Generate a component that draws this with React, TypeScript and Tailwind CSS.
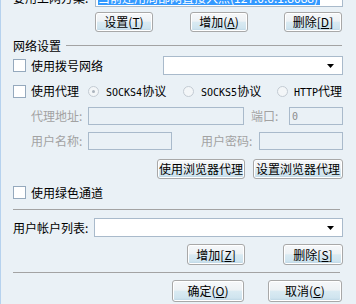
const font = "font-['Noto_Sans_CJK_SC','Noto_Sans',sans-serif]";
const mono = "font-['DejaVu_Sans_Mono','Liberation_Mono',monospace] text-[10px]";

const Btn = ({ children, className = "" }: { children: React.ReactNode; className?: string }) => (
  <div
    className={`flex items-center justify-center rounded-[3px] border border-[#a8a8a8] shadow-[inset_0_0_0_1px_#ffffff] bg-[linear-gradient(to_bottom,#f6f8fa_0%,#eef2f5_45%,#d9eaf2_52%,#cfe4ef_85%,#b8d2e1_100%)] text-[12px] leading-none text-black ${className}`}
  >
    {children}
  </div>
);

const Check = () => <div className="h-[13px] w-[13px] shrink-0 border border-[#95a9bd] bg-white" />;

const Radio = ({ on = false }: { on?: boolean }) => (
  <div className="flex h-[11px] w-[11px] shrink-0 items-center justify-center rounded-full border border-[#c3cbd3] bg-[#f3f6f8]">
    {on && <div className="h-[3px] w-[3px] rounded-full bg-[#aab3bc]" />}
  </div>
);

const Field = ({ className = "", children }: { className?: string; children?: React.ReactNode }) => (
  <div className={`flex items-center border border-[#a9bacb] px-[2px] text-[12px] ${className}`}>{children}</div>
);

const Arrow = () => (
  <svg width="7" height="4" viewBox="0 0 7 4" className="ml-auto mr-[6px]">
    <path d="M0 0h7L3.5 4z" fill="#000" />
  </svg>
);

export default function App() {
  return (
    <div className={`h-[304px] w-[356px] overflow-hidden border-l border-[#b6d2ee] bg-[#eaf1f6] pl-[12px] text-[12px] text-black ${font}`}>
      {/* top: scheme field, mostly scrolled out */}
      <div className="mt-[-12px] flex h-[19px] items-center">
        <span className="w-[82px] whitespace-nowrap">要用上网方案:</span>
        <Field className="h-[19px] w-[248px] bg-white">
          <span className="whitespace-nowrap bg-[#3399ff] pr-[2px] leading-[14px] text-white">当前还用局部网直接入点(127.0.0.1:8088)</span>
        </Field>
      </div>

      <div className="mt-[5px] flex">
        <Btn className="ml-[82px] h-[20px] w-[58px]">设置(<u>T</u>)</Btn>
        <Btn className="ml-[37px] h-[20px] w-[58px]">增加(<u>A</u>)</Btn>
        <Btn className="ml-[36px] h-[20px] w-[58px]">删除[<u>D</u>]</Btn>
      </div>

      <div className="mr-[14px] mt-[7px] flex h-[13px] items-center">
        <span className="whitespace-nowrap leading-none">网络设置</span>
        <div className="ml-[5px] h-px flex-1 bg-[#a3a3a3]" />
      </div>

      <div className="mt-[4px] flex h-[19px] items-center">
        <Check />
        <span className="ml-[5px] w-[132px] leading-none">使用拨号网络</span>
        <Field className="h-[19px] w-[180px] bg-white">
          <Arrow />
        </Field>
      </div>

      <div className="mt-[8px] flex h-[16px] items-center">
        <Check />
        <span className="ml-[5px] w-[57px] leading-none">使用代理</span>
        <div className="flex w-[95px] items-center">
          <Radio on />
          <span className="ml-[7px] whitespace-nowrap leading-none"><span className={mono}>SOCKS4</span>协议</span>
        </div>
        <div className="flex w-[94px] items-center">
          <Radio />
          <span className="ml-[7px] whitespace-nowrap leading-none"><span className={mono}>SOCKS5</span>协议</span>
        </div>
        <div className="flex items-center">
          <Radio />
          <span className="ml-[6px] whitespace-nowrap leading-none"><span className={mono}>HTTP</span>代理</span>
        </div>
      </div>

      <div className="mt-[8px] flex h-[18px] items-center text-[#a2a2a2]">
        <span className="ml-[18px] w-[57px] leading-none">代理地址:</span>
        <Field className="h-[18px] w-[156px]" />
        <span className="ml-[7px] w-[38px] leading-none">端口:</span>
        <Field className="h-[18px] w-[54px] text-[#8c8c8c]"><span className={mono}>0</span></Field>
      </div>

      <div className="mt-[7px] flex h-[18px] items-center text-[#a2a2a2]">
        <span className="ml-[18px] w-[57px] leading-none">用户名称:</span>
        <Field className="h-[18px] w-[84px]" />
        <span className="ml-[29px] w-[58px] leading-none">用户密码:</span>
        <Field className="h-[18px] w-[84px]" />
      </div>

      <div className="mt-[9px] flex">
        <Btn className="ml-[144px] h-[20px] w-[88px]">使用浏览器代理</Btn>
        <Btn className="ml-[8px] h-[20px] w-[90px]">设置浏览器代理</Btn>
      </div>

      <div className="mt-[6px] flex h-[15px] items-center">
        <Check />
        <span className="ml-[5px] leading-none">使用绿色通道</span>
      </div>

      <div className="mr-[16px] mt-[9px] h-px bg-[#a3a3a3]" />

      <div className="mt-[8px] flex h-[19px] items-center">
        <span className="w-[81px] whitespace-nowrap leading-none">用户帐户列表:</span>
        <Field className="h-[19px] w-[249px] bg-white">
          <Arrow />
        </Field>
      </div>

      <div className="mt-[7px] flex">
        <Btn className="ml-[174px] h-[21px] w-[58px]">增加[<u>Z</u>]</Btn>
        <Btn className="ml-[38px] h-[21px] w-[60px]">删除[<u>S</u>]</Btn>
      </div>

      <div className="mr-[16px] mt-[7px] h-px bg-[#a3a3a3]" />

      <div className="mt-[7px] flex">
        <Btn className="ml-[159px] h-[22px] w-[72px]">确定(<u>O</u>)</Btn>
        <Btn className="ml-[24px] h-[22px] w-[74px]">取消(<u>C</u>)</Btn>
      </div>
    </div>
  );
}
